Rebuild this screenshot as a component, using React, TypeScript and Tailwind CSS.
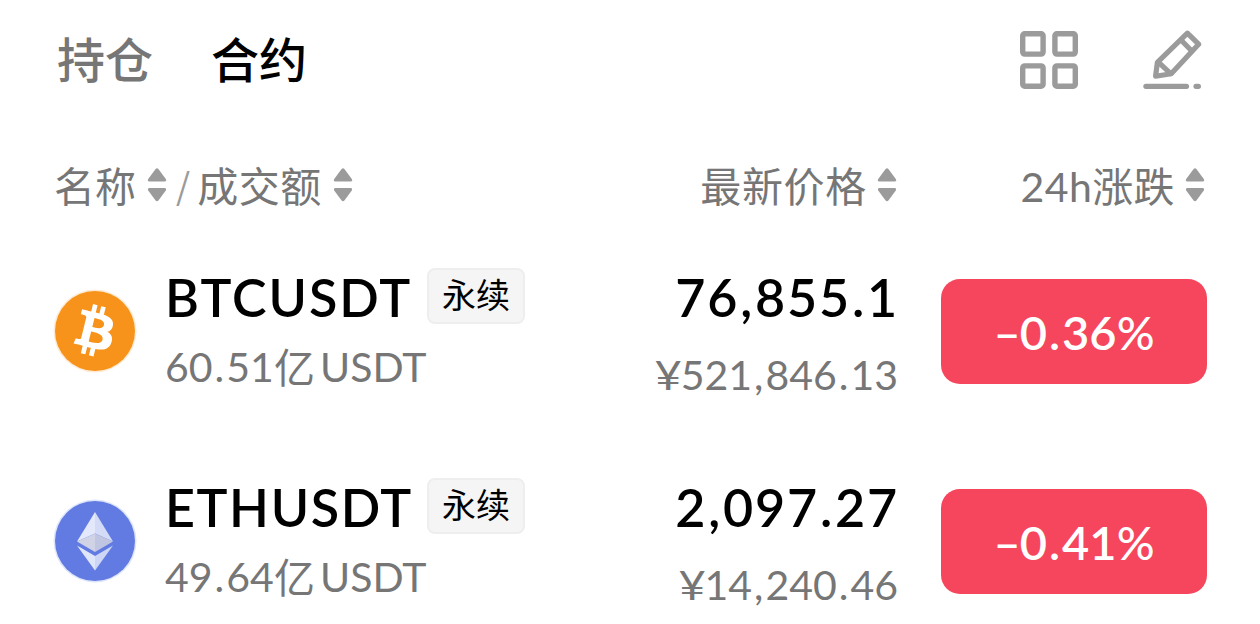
const LATIN = "font-['Lato','Noto_Sans_CJK_SC',sans-serif]";
const CJK = "font-['Noto_Sans_CJK_SC',sans-serif]";

function SortArrows() {
  return (
    <svg viewBox="0 0 20 34" className="h-[34px] w-5 shrink-0 fill-[#9b9b9b]">
      <path d="M8.6 1.1Q10 -.4 11.4 1.1L18.8 11Q19.8 13.2 17.6 13.6H2.4Q.2 13.2 1.2 11Z" />
      <path d="M8.6 32.5Q10 34 11.4 32.5L18.8 22.6Q19.8 20.4 17.6 20H2.4Q.2 20.4 1.2 22.6Z" />
    </svg>
  );
}

function GridIcon() {
  return (
    <svg viewBox="0 0 58 58" className="h-[58px] w-[58px]" fill="none" stroke="#9b9b9b" strokeWidth="5.4">
      <rect x="2.7" y="2.7" width="20.4" height="20.4" rx="2" />
      <rect x="34.9" y="2.7" width="20.4" height="20.4" rx="2" />
      <rect x="2.7" y="34.9" width="20.4" height="20.4" rx="2" />
      <rect x="34.9" y="34.9" width="20.4" height="20.4" rx="2" />
    </svg>
  );
}

function EditIcon() {
  return (
    <svg viewBox="0 0 60 60" className="h-[60px] w-[60px]" fill="none" stroke="#9b9b9b" strokeWidth="5.2" strokeLinecap="round" strokeLinejoin="round">
      <path d="M44.4 3.2L55.6 14.2L28.2 43.8L12.6 46.2L14.4 32.4Z" />
      <path d="M38.2 10.2L48.8 21M15.6 32.4L27.4 43.4" />
      <path d="M2.9 56.3H43.5M53 56.3H55.4" />
    </svg>
  );
}

function BtcLogo() {
  return (
    <svg viewBox="0 0 84 84" className="h-[84px] w-[84px] shrink-0">
      <circle cx="42" cy="42" r="41.5" fill="#fdebd6" />
      <circle cx="42" cy="42" r="40" fill="#f7931a" />
      <path
        transform="translate(-.8 -.6) scale(2.62)"
        fill="#fff"
        d="M23.189 14.02c.314-2.096-1.283-3.223-3.465-3.975l.708-2.84-1.728-.43-.69 2.765c-.454-.114-.92-.22-1.385-.326l.695-2.783L15.596 6l-.708 2.839c-.376-.086-.746-.17-1.104-.26l.002-.009-2.384-.595-.46 1.846s1.283.294 1.256.312c.7.175.826.638.805 1.006l-.806 3.235c.048.012.11.03.18.057l-.183-.045-1.13 4.532c-.086.212-.303.531-.793.41.018.025-1.256-.313-1.256-.313l-.858 1.978 2.25.561c.418.105.828.215 1.231.318l-.715 2.872 1.727.43.708-2.84c.472.127.93.245 1.378.357l-.706 2.828 1.728.43.715-2.866c2.948.558 5.164.333 6.097-2.333.752-2.146-.037-3.385-1.588-4.192 1.13-.26 1.98-1.003 2.207-2.538zm-3.95 5.538c-.533 2.147-4.148.986-5.32.695l.95-3.805c1.172.293 4.929.872 4.37 3.11zm.535-5.569c-.487 1.953-3.495.96-4.47.717l.86-3.45c.975.243 4.118.696 3.61 2.733z"
      />
    </svg>
  );
}

function EthLogo() {
  return (
    <svg viewBox="0 0 84 84" className="h-[84px] w-[84px] shrink-0">
      <circle cx="42" cy="42" r="41.5" fill="#dfe6fb" />
      <circle cx="42" cy="42" r="40" fill="#627be2" />
      <path d="M42 13L24 42.5L42 34.5Z" fill="#e3e8fa" />
      <path d="M42 13L60 42.5L42 34.5Z" fill="#d3dbf6" />
      <path d="M42 34.5L24 42.5L42 53Z" fill="#d0d2e6" />
      <path d="M42 34.5L60 42.5L42 53Z" fill="#c0c5e2" />
      <path d="M24 46.5L42 57V71.5Z" fill="#e0e6fa" />
      <path d="M60 46.5L42 57V71.5Z" fill="#ced6f5" />
    </svg>
  );
}

/** Figures with extra room around the separators. */
function Figure({ value, gap }: { value: string; gap: string }) {
  return (
    <>
      {value.split(/([.,])/).map((part, i) =>
        part === "." || part === "," ? (
          <span key={i} className={gap}>{part}</span>
        ) : (
          part
        ),
      )}
    </>
  );
}

const rows = [
  { symbol: "BTCUSDT", track: "tracking-[2px]", volume: "60.51", price: "76,855.1", cny: "521,846.13", change: "0.36", Logo: BtcLogo },
  { symbol: "ETHUSDT", track: "tracking-[1.6px]", volume: "49.64", price: "2,097.27", cny: "14,240.46", change: "0.41", Logo: EthLogo },
];

export default function App() {
  return (
    <div className={`flex h-[624px] w-[1260px] flex-col overflow-hidden bg-white text-[#767676] ${LATIN}`}>
      <header className="flex h-[120px] shrink-0 items-center justify-between pr-[57px] pl-[57px]">
        <nav className={`flex gap-[58px] pb-[7px] text-[48px] leading-[70px] font-medium ${CJK}`}>
          <span>持仓</span>
          <span className="text-black">合约</span>
        </nav>
        <div className="flex items-center gap-[65px]">
          <GridIcon />
          <EditIcon />
        </div>
      </header>

      <div className={`flex h-[130px] shrink-0 items-center pl-[54px] text-[41px] leading-[60px] ${CJK}`}>
        <div className="flex w-[543px] items-center">
          <span className="pb-[3px]">名称</span>
          <span className="ml-[11px] flex"><SortArrows /></span>
          <span className="ml-[9px] pb-[3px] text-[36px] text-[#9b9b9b]">/</span>
          <span className="ml-[7px] pb-[3px] tracking-[0.6px]">成交额</span>
          <span className="ml-[11px] flex"><SortArrows /></span>
        </div>
        <div className="flex w-[300px] items-center justify-end gap-[10px]">
          <span className="pb-[3px] tracking-[0.7px]">最新价格</span>
          <SortArrows />
        </div>
        <div className="flex w-[308px] items-center justify-end gap-[10px]">
          <span className="tracking-[0.4px]"><span className={LATIN}>24h</span>涨跌</span>
          <SortArrows />
        </div>
      </div>

      <main className="mt-[2px] flex flex-col gap-[52px]">
        {rows.map(({ symbol, track, volume, price, cny, change, Logo }) => (
          <div key={symbol} className="flex h-[158px] items-center pl-[53px]">
            <Logo />
            <div className="ml-[28px] flex h-[158px] w-[432px] flex-col pt-[14px]">
              <div className="flex h-[60px] items-center">
                <span className={`w-[262px] pt-[2px] text-[52px] leading-[60px] font-semibold text-black ${track}`}>{symbol}</span>
                <span className={`flex h-[56px] w-[98px] items-center justify-center rounded-lg border-2 border-[#eeeeee] bg-[#f5f5f5] pb-[5px] text-[34px] leading-none text-black ${CJK}`}>
                  永续
                </span>
              </div>
              <div className="mt-[11px] flex h-[60px] items-center text-[41px] leading-[60px]">
                <span className="w-[109px]"><Figure value={volume} gap="px-[2px]" /></span>
                <span className={`w-[46px] pb-[5px] ${CJK}`}>亿</span>
                <span>USDT</span>
              </div>
            </div>
            <div className="flex h-[158px] w-[301px] flex-col items-end pt-[15px]">
              <span className="-mr-px text-[52px] leading-[60px] font-semibold tracking-[1.8px] text-black">
                <Figure value={price} gap="px-px" />
              </span>
              <span className="mt-[18px] text-[41px] leading-[60px]">
                <span className="-mr-px inline-block origin-right scale-x-115">¥</span>
                <Figure value={cny} gap="px-[2px]" />
              </span>
            </div>
            <div className="ml-[43px] flex h-[105px] w-[266px] items-center justify-center rounded-[19px] bg-[#f6465d] pt-[2px] text-[47px] leading-[60px] font-semibold text-white">
              <span className="-mr-px">–</span>
              <span><Figure value={change} gap="px-[2px]" /></span>
              <span className="font-medium">%</span>
            </div>
          </div>
        ))}
      </main>
    </div>
  );
}
